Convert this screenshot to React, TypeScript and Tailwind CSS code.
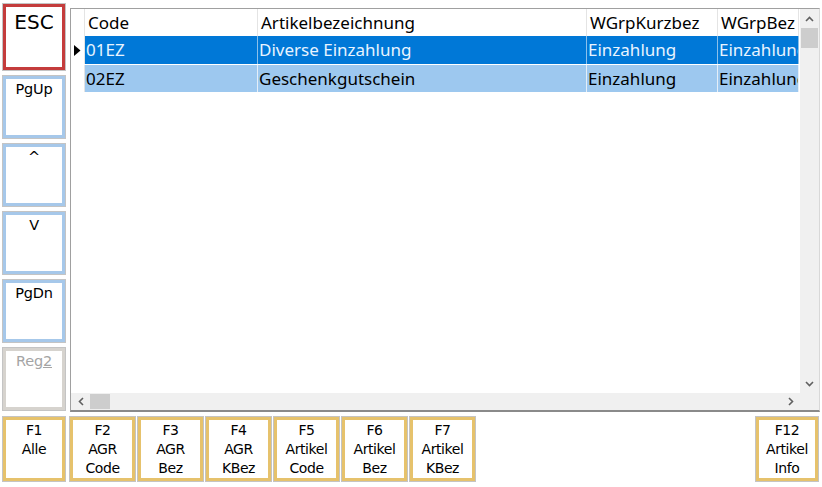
import React from "react";

const FONT = { fontFamily: '"Noto Sans", "Open Sans", sans-serif' };
const BFONT = { fontFamily: '"DejaVu Sans", "Noto Sans", sans-serif' };

function SideBtn({ label, border, h, big, dim }: { label: React.ReactNode; border: string; h: string; big?: boolean; dim?: boolean }) {
  return (
    <div className={`w-[64px] ${h} border border-[#c4c4c4]`}>
      <div className={`w-full h-full border-[3px] ${border} bg-white flex justify-center`}>
        <span
          className={`${big ? "text-[20px] pt-[3px]" : "text-[14.5px] pt-[1px] tracking-[-0.2px]"} ${dim ? "text-[#a4a4a4]" : "text-black"} leading-tight`}
          style={BFONT}
        >
          {label}
        </span>
      </div>
    </div>
  );
}

function FBtn({ lines, w }: { lines: string[]; w: string }) {
  return (
    <div className={`${w} h-[66px] border border-[#c4c4c4]`}>
      <div className="w-full h-full border-[3px] border-[#e6c26c] bg-white flex flex-col items-center pt-[1px]">
        {lines.map((l, i) => (
          <span key={i} className="text-[14px] leading-[19px] text-black tracking-[-0.4px]" style={BFONT}>
            {l}
          </span>
        ))}
      </div>
    </div>
  );
}

const cols = [
  { name: "Code", w: "w-[173px]" },
  { name: "Artikelbezeichnung", w: "w-[329px]" },
  { name: "WGrpKurzbez", w: "w-[131px]" },
  { name: "WGrpBez", w: "w-[81px]" },
];

const rows = [
  ["01EZ", "Diverse Einzahlung", "Einzahlung", "Einzahlung"],
  ["02EZ", "Geschenkgutschein", "Einzahlung", "Einzahlung"],
];

export default function App() {
  return (
    <div className="w-[822px] h-[487px] bg-white relative overflow-hidden" style={FONT}>
      <div className="flex h-[413px]">
        {/* left buttons */}
        <div className="w-[70px] pl-[2px] pt-[3px] flex flex-col gap-[4px]">
          <SideBtn label="ESC" border="border-[#c43c3c]" h="h-[68px]" big />
          <SideBtn label="PgUp" border="border-[#a6c8ea]" h="h-[64px]" />
          <SideBtn label="^" border="border-[#a6c8ea]" h="h-[64px]" />
          <SideBtn label="V" border="border-[#a6c8ea]" h="h-[64px]" />
          <SideBtn label="PgDn" border="border-[#a6c8ea]" h="h-[64px]" />
          <SideBtn
            label={
              <>
                Reg<span className="underline">2</span>
              </>
            }
            border="border-[#d6d3ce]"
            h="h-[64px]"
            dim
          />
        </div>
        {/* grid */}
        <div className="mt-[8px] w-[750px] h-[404px] border-l border-t border-[#a0a0a0] border-r border-r-[#d8d8d8] border-b-2 border-b-[#8a8a8a] flex flex-col bg-white">
          <div className="flex flex-1 min-h-0">
            <div className="flex-1 min-w-0 overflow-hidden">
              {/* header */}
              <div className="flex h-[27px]">
                <div className="w-[14px] shrink-0 border-r border-[#e4e4e4]" />
                {cols.map((c, i) => (
                  <div
                    key={i}
                    className={`${c.w} shrink-0 border-r border-[#e4e4e4] pl-[3px] text-[17px] leading-[27px] whitespace-nowrap overflow-hidden text-black`}
                  >
                    {c.name}
                  </div>
                ))}
              </div>
              {rows.map((r, ri) => (
                <div key={ri} className={`flex h-[28px] ${ri === 0 ? "" : "border-t border-[#ffffff]"}`}>
                  <div className="w-[14px] shrink-0 border-r border-[#e4e4e4] flex items-center justify-center">
                    {ri === 0 && (
                      <svg width="7" height="11" viewBox="0 0 7 11">
                        <path d="M0 0 L6.5 5.5 L0 11 Z" fill="#000" />
                      </svg>
                    )}
                  </div>
                  {r.map((v, ci) => (
                    <div
                      key={ci}
                      className={`${cols[ci].w} shrink-0 border-r ${
                        ri === 0 ? "bg-[#0078d7] text-[#e8f4ff] border-[#8cc0ea]" : "bg-[#9dc8ef] text-black border-[#e4eef8]"
                      } pl-[1px] text-[17px] leading-[28px] whitespace-nowrap overflow-hidden`}
                    >
                      {v}
                    </div>
                  ))}
                </div>
              ))}
            </div>
            {/* vertical scrollbar */}
            <div className="w-[19px] shrink-0 bg-[#f0f0f0] flex flex-col items-center">
              <div className="h-[19px] flex items-center justify-center">
                <svg width="9" height="6" viewBox="0 0 9 6">
                  <path d="M1 5 L4.5 1.5 L8 5" fill="none" stroke="#606060" strokeWidth="1.6" />
                </svg>
              </div>
              <div className="w-[17px] h-[20px] bg-[#cdcdcd]" />
              <div className="flex-1" />
              <div className="h-[19px] flex items-center justify-center">
                <svg width="9" height="6" viewBox="0 0 9 6">
                  <path d="M1 1 L4.5 4.5 L8 1" fill="none" stroke="#606060" strokeWidth="1.6" />
                </svg>
              </div>
            </div>
          </div>
          {/* horizontal scrollbar */}
          <div className="h-[17px] shrink-0 bg-[#f0f0f0] flex items-center">
            <div className="w-[19px] h-full flex items-center justify-center">
              <svg width="6" height="9" viewBox="0 0 6 9">
                <path d="M5 1 L1.5 4.5 L5 8" fill="none" stroke="#606060" strokeWidth="1.6" />
              </svg>
            </div>
            <div className="w-[20px] h-[15px] bg-[#cdcdcd]" />
            <div className="flex-1" />
            <div className="w-[19px] h-full flex items-center justify-center">
              <svg width="6" height="9" viewBox="0 0 6 9">
                <path d="M1 1 L4.5 4.5 L1 8" fill="none" stroke="#606060" strokeWidth="1.6" />
              </svg>
            </div>
            <div className="w-[19px] h-full" />
          </div>
        </div>
      </div>
      {/* bottom buttons */}
      <div className="flex pt-[3px] pl-[2px]">
        <FBtn lines={["F1", "Alle"]} w="w-[64px]" />
        <div className="flex gap-[1px] ml-[3px]">
          <FBtn lines={["F2", "AGR", "Code"]} w="w-[67px]" />
          <FBtn lines={["F3", "AGR", "Bez"]} w="w-[67px]" />
          <FBtn lines={["F4", "AGR", "KBez"]} w="w-[67px]" />
          <FBtn lines={["F5", "Artikel", "Code"]} w="w-[67px]" />
          <FBtn lines={["F6", "Artikel", "Bez"]} w="w-[67px]" />
          <FBtn lines={["F7", "Artikel", "KBez"]} w="w-[67px]" />
        </div>
        <div className="flex-1" />
        <div className="mr-[3px]">
          <FBtn lines={["F12", "Artikel", "Info"]} w="w-[64px]" />
        </div>
      </div>
    </div>
  );
}
